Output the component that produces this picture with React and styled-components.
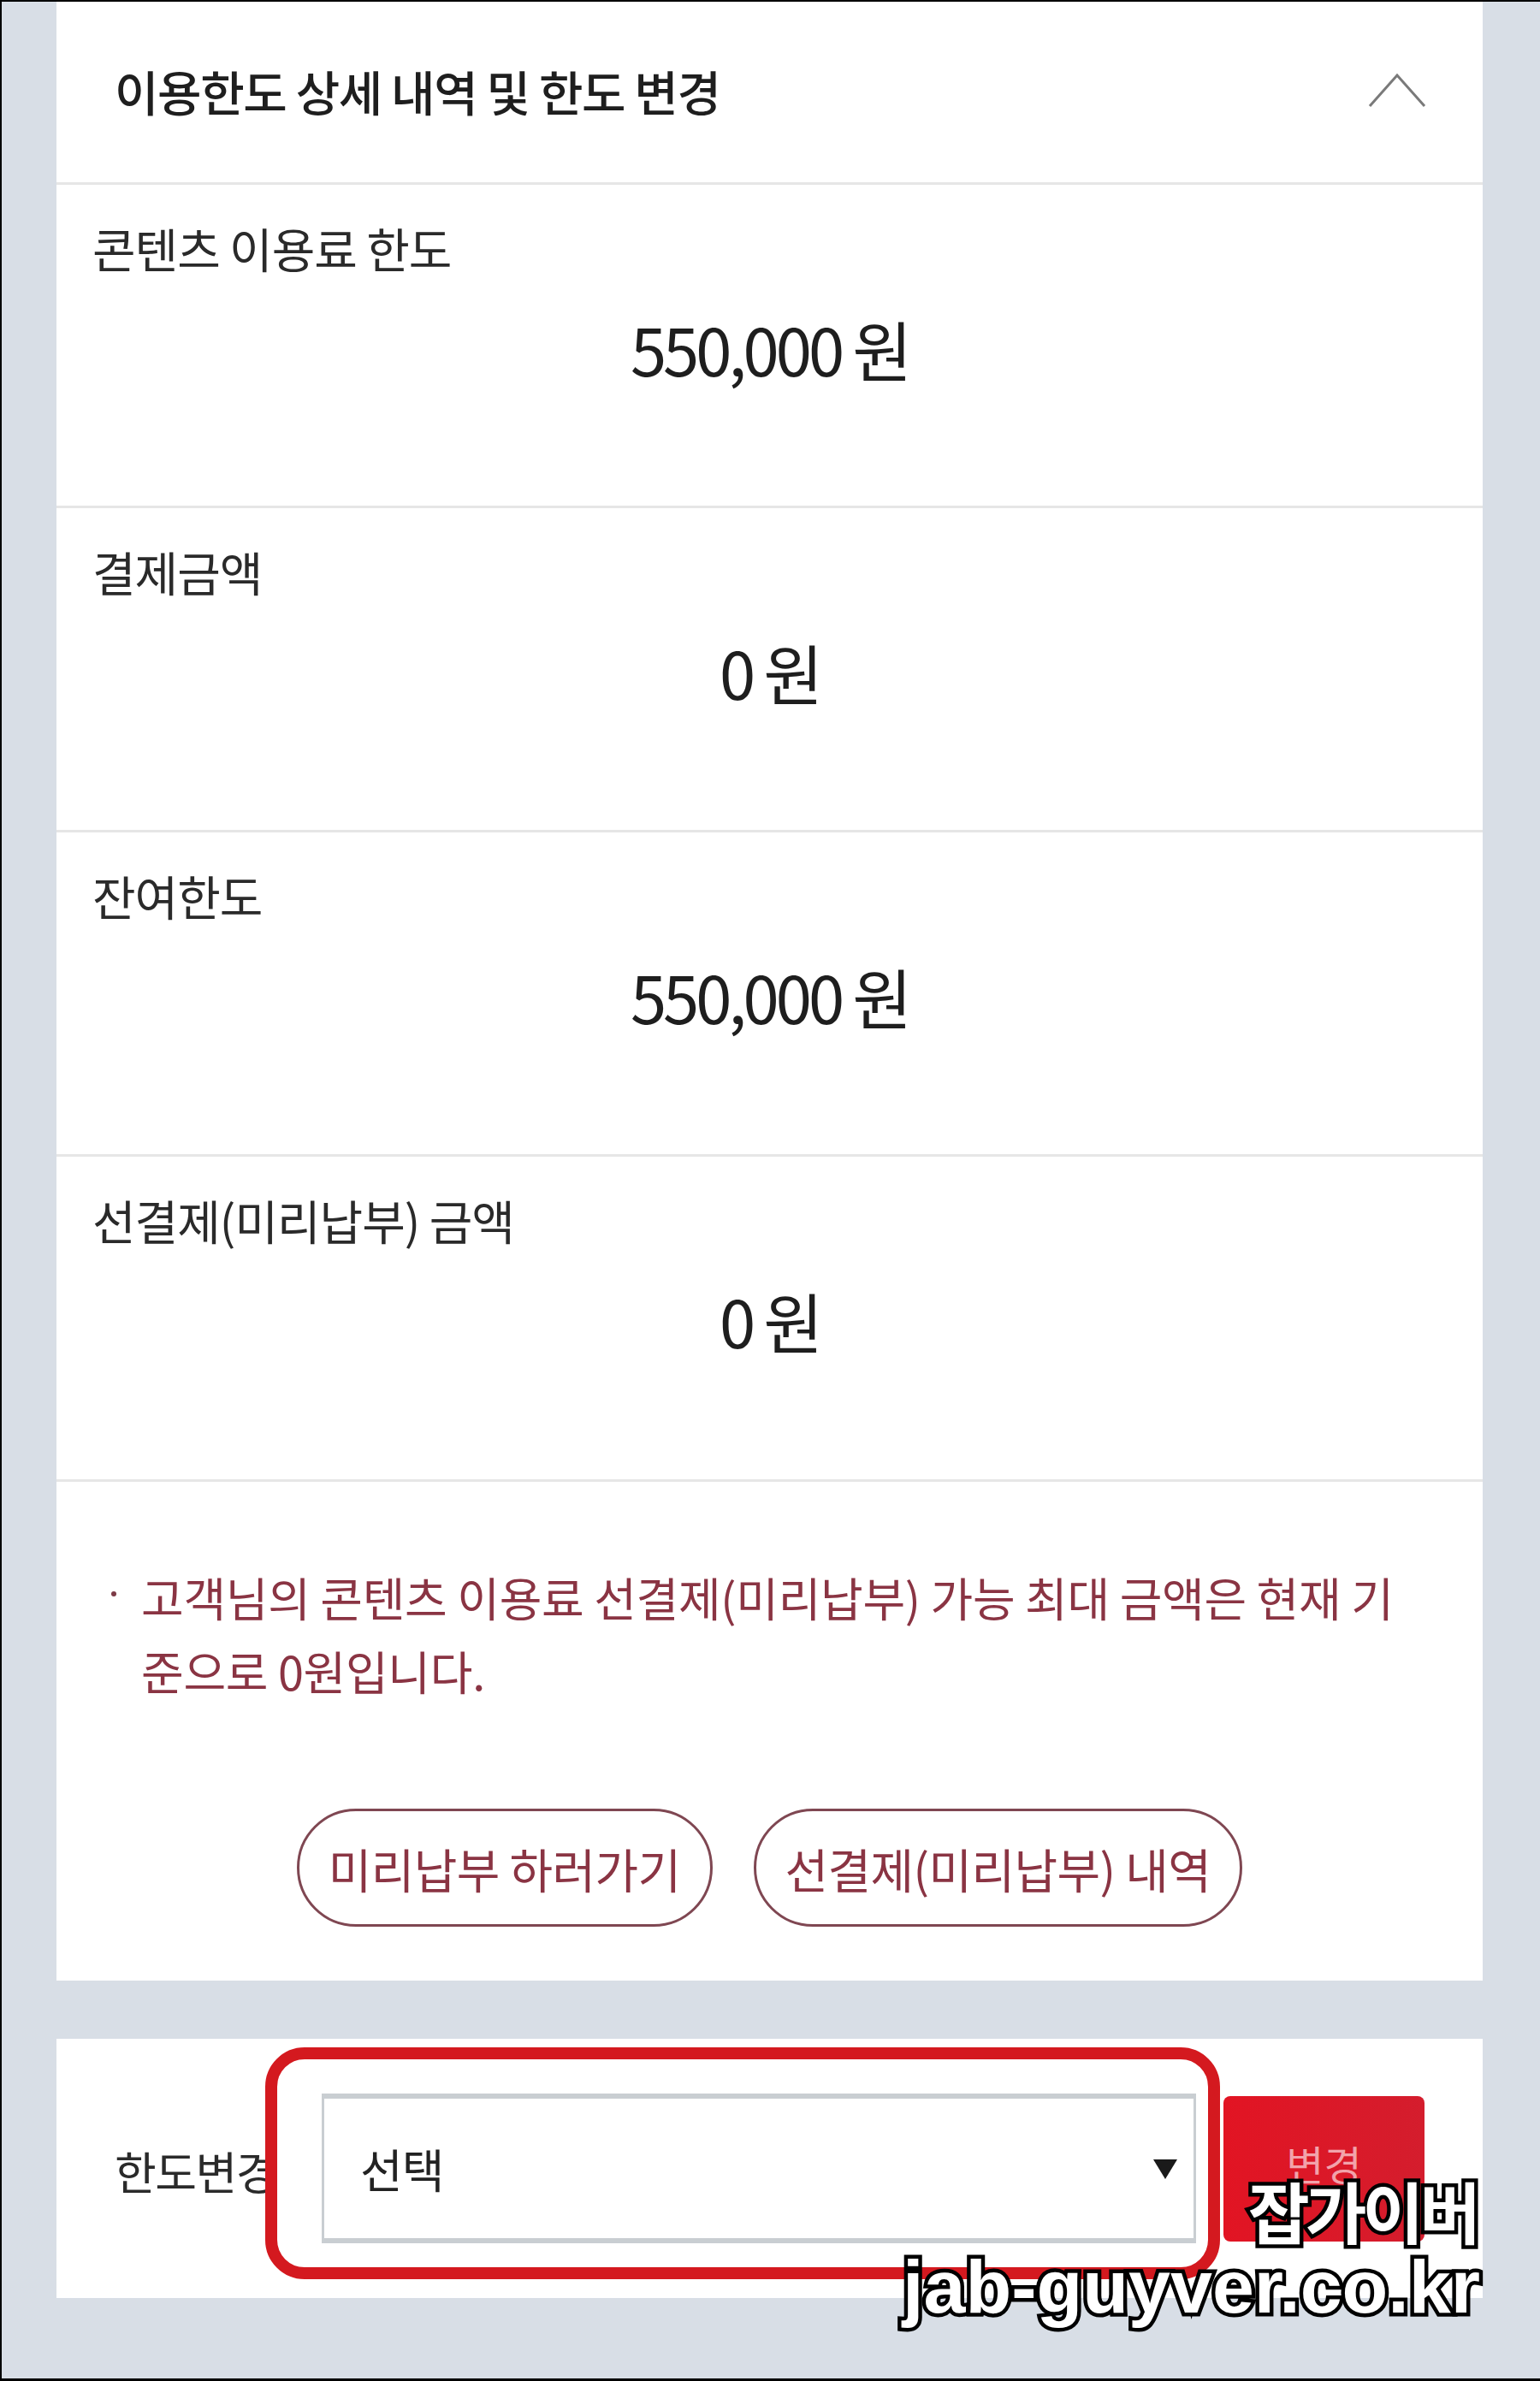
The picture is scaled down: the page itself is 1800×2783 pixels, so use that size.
import React from "react";
import styled, { createGlobalStyle } from "styled-components";

const Global = createGlobalStyle`
  html, body { margin: 0; padding: 0; background: #d8dee6; }
  body { font-family: "Noto Sans CJK KR", "Noto Sans", sans-serif; }
  * { box-sizing: border-box; }
`;

const Page = styled.div`
  position: relative;
  width: 1800px;
  height: 2783px;
  background: #d8dee6;
  border-top: 2px solid #000;
  border-left: 2px solid #000;
  border-bottom: 3px solid #000;
  padding: 0 67px 0 64px;
  overflow: hidden;
`;

const Panel = styled.section`
  background: #fff;
  display: flex;
  flex-direction: column;
`;

const Header = styled.div`
  height: 214px;
  border-bottom: 3px solid #e6e6e6;
  display: flex;
  align-items: center;
  justify-content: space-between;
  padding: 0 66px 4px 68px;
`;

const Title = styled.h2`
  margin: 0;
  font-size: 56px;
  font-weight: 500;
  letter-spacing: -1.4px;
  line-height: 64px;
  color: #1e1e1e;
`;

const Row = styled.div`
  height: ${(p) => p.$h}px;
  border-bottom: 3px solid #e6e6e6;
  padding: 40px 0 0 42px;
  display: flex;
  flex-direction: column;
`;

const Label = styled.div`
  font-size: 55px;
  line-height: 67px;
  letter-spacing: -1px;
  color: #2a2a2a;
`;

const Value = styled.div`
  margin-top: 40px;
  margin-left: -42px;
  text-align: center;
  font-size: 76px;
  line-height: 88px;
  letter-spacing: -4px;
  color: #1e1e1e;
`;

const Notice = styled.div`
  padding: 92px 0 63px 64px;
  display: flex;
  flex-direction: column;
`;

const NoticeLine = styled.div`
  display: flex;
  align-items: flex-start;
`;

const Bullet = styled.span`
  width: 6px;
  height: 6px;
  border-radius: 50%;
  background: #7d3a46;
  margin-top: 36px;
  margin-right: 29px;
  flex: none;
`;

const NoticeText = styled.p`
  margin: 0;
  font-size: 54px;
  line-height: 86px;
  letter-spacing: -0.3px;
  color: #8a3443;
  white-space: nowrap;
`;

const Buttons = styled.div`
  margin-top: 118px;
  margin-left: -64px;
  display: flex;
  justify-content: center;
  gap: 48px;
`;

const Pill = styled.button`
  height: 138px;
  padding: 0 ${(p) => p.$pad}px;
  border: 3px solid #7f4752;
  border-radius: 69px;
  background: #fff;
  font-family: "Noto Sans CJK KR", "Noto Sans", sans-serif;
  font-size: 55px;
  letter-spacing: -0.6px;
  color: #8a3443;
  cursor: pointer;
`;

const Gap = styled.div`
  height: 68px;
`;

const ChangePanel = styled.section`
  background: #fff;
  height: 303px;
  display: flex;
  align-items: center;
  padding: 0 68px 0 68px;
`;

const ChangeLabel = styled.span`
  width: 242px;
  flex: none;
  font-size: 53px;
  letter-spacing: -1.5px;
  color: #2a2a2a;
  margin-top: 4px;
  white-space: nowrap;
`;

const SelectBox = styled.div`
  flex: 1;
  height: 175px;
  border-style: solid;
  border-color: #c9ced2;
  border-width: 6px 3px 6px 3px;
  display: flex;
  align-items: center;
  justify-content: space-between;
  padding: 0 18px 0 42px;
  font-size: 54px;
  letter-spacing: -1px;
  color: #222;
`;

const RedButton = styled.button`
  margin-left: 32px;
  width: 235px;
  height: 170px;
  flex: none;
  border: none;
  border-radius: 8px;
  background: linear-gradient(90deg, #e21423, #d41d2d);
  font-family: "Noto Sans CJK KR", "Noto Sans", sans-serif;
  font-size: 48px;
  color: #f2a3ab;
  padding-bottom: 14px;
`;

const Highlight = styled.div`
  position: absolute;
  left: 308px;
  top: 2391px;
  width: 1116px;
  height: 271px;
  border: 14px solid #d4191f;
  border-radius: 46px;
  pointer-events: none;
`;

const Watermark = styled.div`
  position: absolute;
  right: 70px;
  top: 2534px;
  display: flex;
  flex-direction: column;
  align-items: flex-end;
  pointer-events: none;
  color: #fff;
  -webkit-text-stroke: 9px #000;
  paint-order: stroke fill;
`;

const MarkKo = styled.span`
  font-family: "Noto Sans CJK KR", sans-serif;
  font-weight: 700;
  font-size: 78px;
  line-height: 94px;
  letter-spacing: -5px;
  margin-right: 4px;
`;

const MarkUrl = styled.span`
  font-family: "Liberation Sans", Arial, sans-serif;
  font-weight: 700;
  font-size: 88px;
  line-height: 86px;
  letter-spacing: 0px;
`;

const rows = [
  { label: "콘텐츠 이용료 한도", value: "550,000 원", h: 378 },
  { label: "결제금액", value: "0 원", h: 379 },
  { label: "잔여한도", value: "550,000 원", h: 379 },
  { label: "선결제(미리납부) 금액", value: "0 원", h: 380 },
];

export default function App() {
  return (
    <>
      <Global />
      <Page>
        <Panel>
          <Header>
            <Title>이용한도 상세 내역 및 한도 변경</Title>
            <svg width="68" height="42" viewBox="0 0 68 42">
              <polyline points="2,39 34,3 66,39" fill="none" stroke="#7a7a7a" strokeWidth="3" />
            </svg>
          </Header>
          {rows.map((r) => (
            <Row key={r.label} $h={r.h}>
              <Label>{r.label}</Label>
              <Value>{r.value}</Value>
            </Row>
          ))}
          <Notice>
            <NoticeLine>
              <Bullet />
              <NoticeText>
                고객님의 콘텐츠 이용료 선결제(미리납부) 가능 최대 금액은 현재 기
                <br />
                준으로 0원입니다.
              </NoticeText>
            </NoticeLine>
            <Buttons>
              <Pill $pad={34}>미리납부 하러가기</Pill>
              <Pill $pad={34}>선결제(미리납부) 내역</Pill>
            </Buttons>
          </Notice>
        </Panel>
        <Gap />
        <ChangePanel>
          <ChangeLabel>한도변경</ChangeLabel>
          <SelectBox>
            <span>선택</span>
            <svg width="30" height="26" viewBox="0 0 30 26">
              <polygon points="1,2 29,2 15,25" fill="#1a1a1a" />
            </svg>
          </SelectBox>
          <RedButton>변경</RedButton>
        </ChangePanel>
        <Highlight />
        <Watermark>
          <MarkKo>잡가이버</MarkKo>
          <MarkUrl>jab-guyver.co.kr</MarkUrl>
        </Watermark>
      </Page>
    </>
  );
}
